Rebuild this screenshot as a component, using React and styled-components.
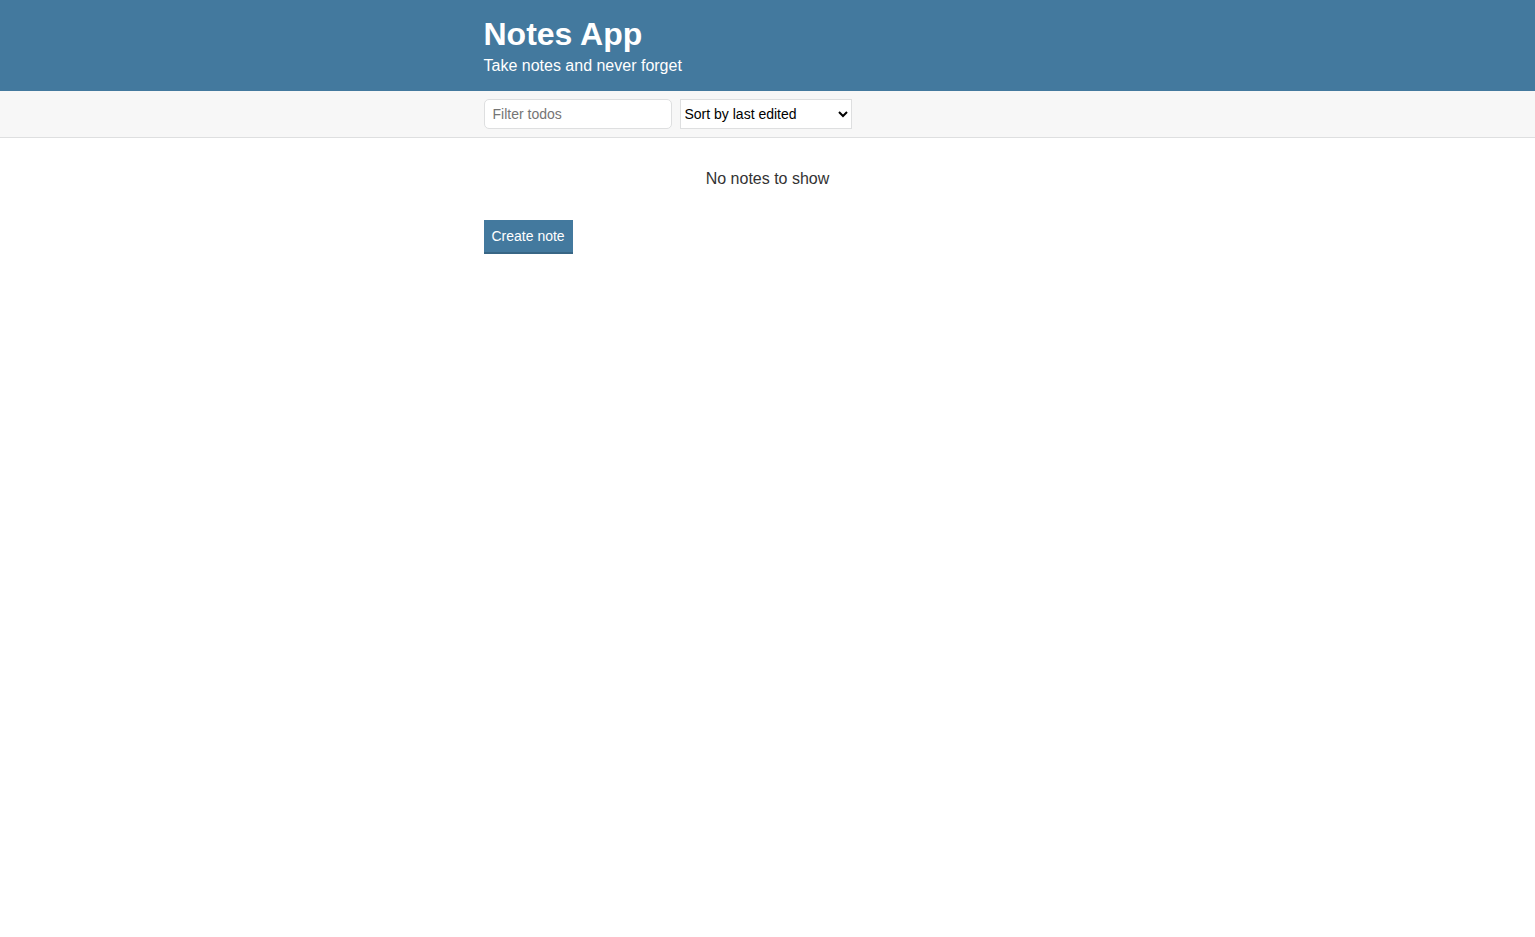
import styled, { createGlobalStyle } from 'styled-components';

const GlobalStyle = createGlobalStyle`
  * { box-sizing: border-box; }
  body {
    margin: 0;
    color: #333;
    font-family: "Liberation Sans", Arial, Helvetica, sans-serif;
    font-size: 16px;
    background: white;
  }
`;

const Container = styled.div`
  max-width: 600px;
  margin: 0 auto;
  padding: 0 16px;
`;

const Header = styled.header`
  background: #43799e;
  color: white;
  padding: 16px 0;
`;

const Title = styled.h1`
  margin: 0 0 4px;
  font-size: 32px;
  line-height: 37px;
  font-weight: bold;
`;

const Subtitle = styled.h2`
  margin: 0;
  font-size: 16px;
  line-height: 18px;
  font-weight: 300;
`;

const Actions = styled.div`
  background-color: #f7f7f7;
  border-bottom: 1px solid #dedfe0;
  padding: 8px 0;
`;

const ActionsRow = styled(Container)`
  display: flex;
  align-items: center;
  min-height: 30px;
`;

const Input = styled.input`
  border: 1px solid #dedfe0;
  border-radius: 5px;
  font-family: inherit;
  font-size: 14px;
  font-weight: 300;
  height: 30px;
  width: 188px;
  margin-right: 8px;
  padding: 4px 8px;
  color: #333;
  &::placeholder { color: #757575; }
`;

const Dropdown = styled.select`
  border-radius: 0;
  border: 1px solid #dedfe0;
  background: white;
  font-family: inherit;
  font-size: 14px;
  height: 30px;
  width: 172px;
  color: black;
  padding: 0;
`;

const Empty = styled.p`
  text-align: center;
  margin: 32px 0;
  line-height: 18px;
`;

const Button = styled.button`
  background: #43799e;
  border: none;
  border-bottom: 2px solid #386685;
  color: white;
  font-family: inherit;
  font-size: 14px;
  font-weight: 300;
  padding: 8px;
  line-height: 16px;
  cursor: pointer;
`;

export default function App() {
  return (
    <>
      <GlobalStyle />
      <Header>
        <Container>
          <Title>Notes App</Title>
          <Subtitle>Take notes and never forget</Subtitle>
        </Container>
      </Header>
      <Actions>
        <ActionsRow>
          <Input type="text" placeholder="Filter todos" />
          <Dropdown defaultValue="byEdited">
            <option value="byEdited">Sort by last edited</option>
            <option value="byCreated">Sort by recently created</option>
            <option value="alphabetical">Sort alphabetically</option>
          </Dropdown>
        </ActionsRow>
      </Actions>
      <Container>
        <Empty>No notes to show</Empty>
        <Button>Create note</Button>
      </Container>
    </>
  );
}
